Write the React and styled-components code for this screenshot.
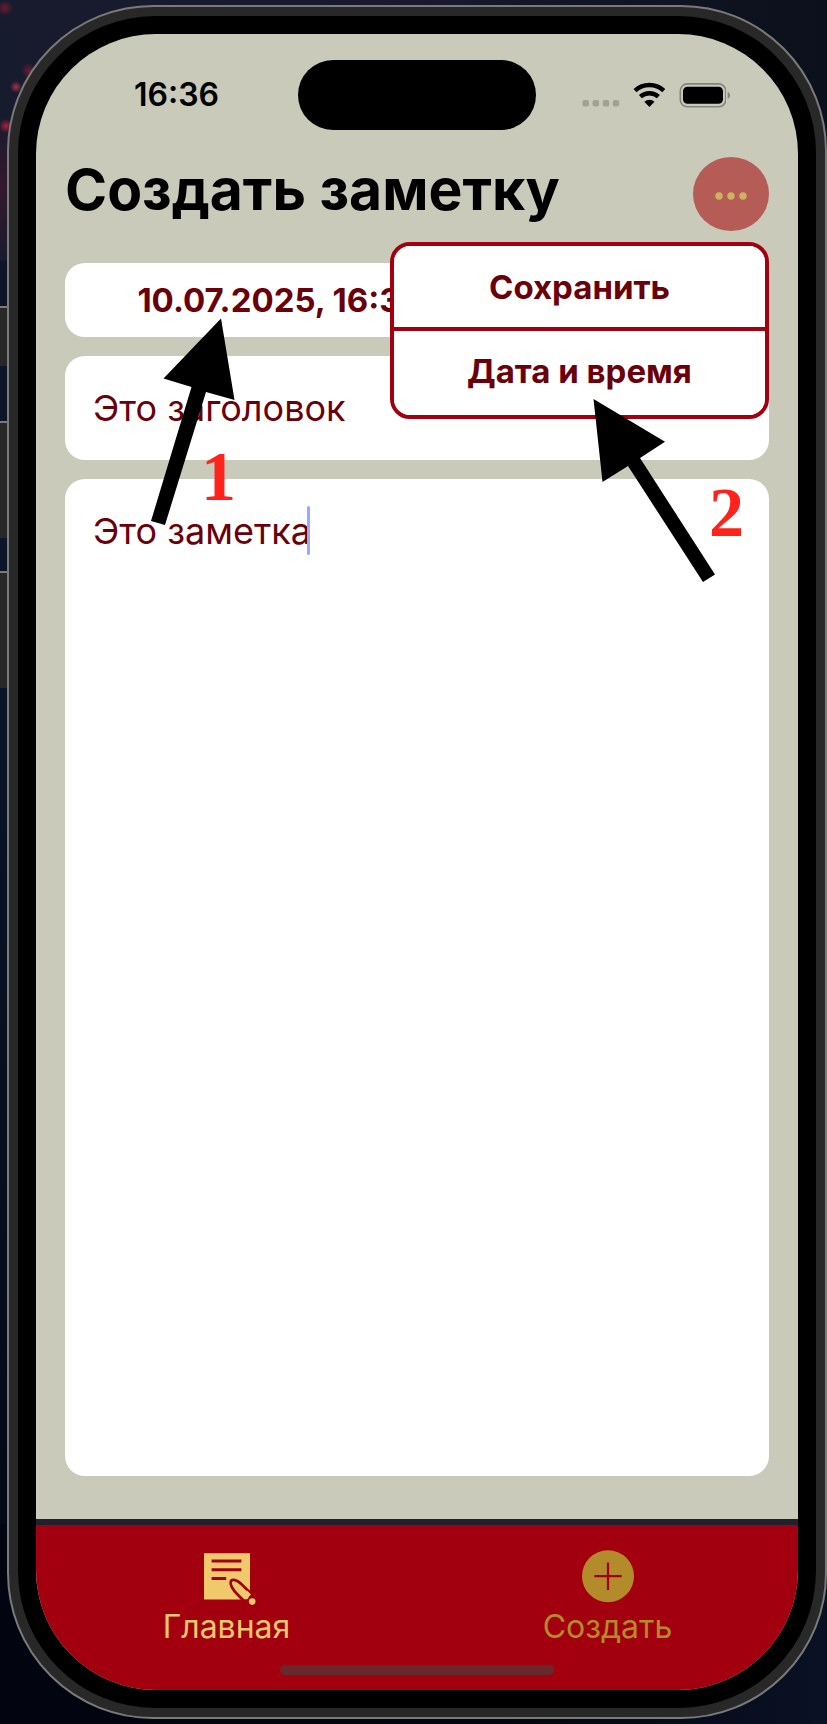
import React from "react";
import styled, { createGlobalStyle } from "styled-components";

const GlobalStyle = createGlobalStyle`
  *, *::before, *::after { box-sizing: border-box; }
  body {
    margin: 0;
    font-family: Inter, "Liberation Sans", sans-serif;
    background: #060a17;
  }
  button, input, textarea { font: inherit; margin: 0; border: 0; }
`;

const colors = {
  screen: "#c9cab9",
  maroon: "#6a000a",
  red: "#a3000f",
  gold: "#efc96c",
  goldDim: "#b38b2b",
  edge: "#7a7a7a",
  metal: "#282828",
};

const Desktop = styled.div`
  display: flex;
  min-height: 100vh;
  padding: 5px 0;
  background:
    radial-gradient(circle at 5px 8px, #6d1a30 0, transparent 8px),
    radial-gradient(circle at 16px 87px, #a83247 0, transparent 6px),
    radial-gradient(circle at 6px 126px, #b01f3a 0, transparent 7px),
    radial-gradient(circle at 29px 71px, #6d1a30 0, transparent 8px),
    radial-gradient(ellipse at 0 190px, #35182d 0, transparent 40px),
    linear-gradient(90deg, #171b2e 0, #1a1a2c 45%, #0b101c 100%) top / 100% 260px no-repeat,
    linear-gradient(90deg, #02040f 0, #03060f 60%, #0a1124 100%) bottom / 100% 200px no-repeat,
    linear-gradient(#12162a 0, #0a1428 40%, #020613 100%);
`;

const SideKeys = styled.div`
  flex: none;
  display: flex;
  flex-direction: column;
  width: 7px;
  padding-top: 301px;
`;

const SideKey = styled.div`
  height: ${(p) => p.$height}px;
  margin-bottom: ${(p) => p.$gap}px;
  border-top: 2px solid ${colors.edge};
  background: ${colors.metal};
`;

const Phone = styled.div`
  flex: 1;
  display: flex;
  border: 2px solid ${colors.edge};
  border-radius: 146px;
  background: ${colors.metal};
  padding: 9px;
`;

const Bezel = styled.div`
  flex: 1;
  display: flex;
  border-radius: 137px;
  background: #000;
  padding: 18px;
`;

const Screen = styled.div`
  position: relative;
  flex: 1;
  min-width: 0;
  display: flex;
  flex-direction: column;
  overflow: hidden;
  border-radius: 120px;
  background: ${colors.screen};
`;

const StatusBar = styled.div`
  display: grid;
  grid-template-columns: 1fr 238px 1fr;
  align-items: center;
  padding-top: 26px;
`;

const Clock = styled.time`
  justify-self: end;
  padding-right: 79px;
  font-size: 32px;
  line-height: 40px;
  font-weight: 600;
  color: #000;
`;

const Island = styled.div`
  height: 70px;
  border-radius: 35px;
  background: #000;
`;

const StatusIcons = styled.div`
  display: flex;
  padding-left: 46px;
`;

const Content = styled.main`
  flex: 1;
  display: flex;
  flex-direction: column;
  padding: 27px 29px 43px;
`;

const Header = styled.header`
  position: relative;
  display: flex;
  align-items: center;
  justify-content: space-between;
  margin-bottom: 32px;
`;

const Title = styled.h1`
  margin: 0;
  font-size: 57px;
  line-height: 66px;
  font-weight: 700;
  padding-bottom: 8px;
  color: #000;
  white-space: nowrap;
`;

const MoreButton = styled.button`
  flex: none;
  display: flex;
  align-items: center;
  justify-content: center;
  width: 76px;
  height: 74px;
  padding: 4px 0 0;
  border-radius: 50%;
  background: #b65c56;
`;

const Menu = styled.div`
  position: absolute;
  z-index: 2;
  top: 85px;
  right: 0;
  width: 379px;
  display: flex;
  flex-direction: column;
  overflow: hidden;
  border: 4px solid ${colors.red};
  border-radius: 20px;
  background: #fff;
`;

const MenuItem = styled.button`
  height: 81px;
  padding: 0;
  background: #fff;
  color: ${colors.maroon};
  font-size: 33px;
  line-height: 40px;
  font-weight: 700;

  & + & {
    height: 88px;
    padding-bottom: 4px;
    border-top: 4px solid ${colors.red};
  }
`;

const Form = styled.form`
  flex: 1;
  display: flex;
  flex-direction: column;
  gap: 19px;
`;

const DateField = styled.button`
  display: flex;
  width: 100%;
  padding: 0;
  border-radius: 20px;
  background: #fff;
  color: ${colors.maroon};
`;

const DateText = styled.span`
  width: 61%;
  text-align: center;
  font-size: 33px;
  line-height: 74px;
  font-weight: 700;
`;

const TitleInput = styled.input`
  width: 100%;
  height: 104px;
  padding: 0 28px;
  border-radius: 20px;
  outline: none;
  background: #fff;
  color: ${colors.maroon};
  font-size: 36px;
  line-height: 48px;
`;

const NoteBox = styled.div`
  position: relative;
  flex: 1;
  display: flex;
`;

const NoteInput = styled.textarea`
  flex: 1;
  min-height: 400px;
  padding: 28px;
  border-radius: 20px;
  outline: none;
  resize: none;
  background: #fff;
  color: ${colors.maroon};
  font-size: 36px;
  line-height: 48px;
`;

const Caret = styled.span`
  position: absolute;
  top: 27px;
  left: 242px;
  width: 3px;
  height: 49px;
  border-radius: 2px;
  background: #99a9ff;
`;

const TabBar = styled.nav`
  display: flex;
  flex-direction: column;
  align-items: center;
  border-top: 6px solid #21202c;
  background: ${colors.red};
  padding: 24px 0 15px;
`;

const Tabs = styled.div`
  display: flex;
  width: 100%;
`;

const Tab = styled.a`
  flex: 1;
  display: flex;
  flex-direction: column;
  align-items: center;
  text-decoration: none;
  color: ${(p) => (p.$active ? colors.goldDim : colors.gold)};
  font-size: 32px;
  line-height: 36px;
`;

const HomeIndicator = styled.div`
  width: 36%;
  height: 10px;
  margin-top: 20px;
  border-radius: 5px;
  background: #67292c;
`;

const Callout = styled.div`
  position: absolute;
  z-index: 3;
  pointer-events: none;
  top: ${(p) => p.$top}px;
  left: ${(p) => (p.$left === undefined ? "auto" : p.$left + "px")};
  right: ${(p) => (p.$right === undefined ? "auto" : p.$right + "px")};
`;

const CalloutNumber = styled(Callout)`
  font-family: "Liberation Serif", serif;
  font-weight: 700;
  font-size: 70px;
  line-height: 70px;
  color: #ff231b;
`;

const Arrow = styled.svg`
  display: block;
`;

const SignalDots = () => (
  <svg width="144" height="26" viewBox="0 0 144 26" aria-hidden="true">
    <g fill="#a1a294">
      <rect x="0.5" y="18" width="6.5" height="6.5" rx="2" />
      <rect x="10.6" y="18" width="6.5" height="6.5" rx="2" />
      <rect x="20.7" y="18" width="6.5" height="6.5" rx="2" />
      <rect x="30.8" y="18" width="6.5" height="6.5" rx="2" />
    </g>
    <g fill="none" stroke="#000" strokeWidth="4.4">
      <path d="M53 8.6a21.5 21.5 0 0 1 28.8 0" />
      <path d="M58.4 14.6a13.6 13.6 0 0 1 18 0" />
    </g>
    <path d="M67.4 24.9L62.3 19.7a7.6 7.6 0 0 1 10.2 0z" fill="#000" />
    <rect x="98.3" y="1.9" width="45.4" height="22.9" rx="7" fill="none" stroke="#85867b" strokeWidth="1.6" />
    <rect x="101" y="4.8" width="40" height="17" rx="4.5" fill="#000" />
  </svg>
);

const BatteryCap = () => (
  <svg width="5" height="26" viewBox="0 0 5 26" aria-hidden="true">
    <path d="M1.6 9.7c1.6.6 2.4 2 2.4 3.6s-.8 3-2.4 3.6z" fill="#85867b" />
  </svg>
);

const Dots = () => (
  <svg width="34" height="10" viewBox="0 0 34 10" aria-hidden="true">
    <g fill="#ccb360">
      <circle cx="5" cy="5" r="3.7" />
      <circle cx="17" cy="5" r="3.7" />
      <circle cx="29" cy="5" r="3.7" />
    </g>
  </svg>
);

const NoteIcon = () => (
  <svg width="60" height="60" viewBox="0 0 60 60" aria-hidden="true">
    <rect x="7" y="4.2" width="46" height="46.3" fill={colors.gold} />
    <path
      d="M14.6 12h29.8M14.6 20.8h29.8M14.6 29.6h14.6"
      stroke={colors.red}
      strokeWidth="3"
    />
    <path
      d="M53 43.5L43.5 34.3C40 31.5 36.5 30.3 34.5 31.3C32.3 33.5 34.3 38 37.5 42.2C40.5 45.8 43.5 48.4 46.5 51.5L51 52L54 47z"
      fill={colors.gold}
      stroke={colors.red}
      strokeWidth="2.8"
    />
    <path d="M44 51h6l4-5v9l-8 1z" fill={colors.red} />
    <path d="M46 46l4-4.5 4 4-4.5 4.5z" fill={colors.gold} />
    <circle cx="55.2" cy="52.6" r="3.3" fill={colors.gold} />
  </svg>
);

const PlusIcon = () => (
  <svg width="60" height="60" viewBox="0 0 60 60" aria-hidden="true">
    <circle cx="30" cy="27.2" r="26" fill={colors.goldDim} />
    <path d="M16.3 27.2h27.4M30 13.5v27.4" stroke={colors.red} strokeWidth="2.2" />
  </svg>
);

export default function App() {
  return (
    <>
      <GlobalStyle />
      <Desktop>
        <SideKeys>
          <SideKey $height={60} $gap={55} />
          <SideKey $height={117} $gap={33} />
          <SideKey $height={117} $gap={0} />
        </SideKeys>
        <Phone>
          <Bezel>
            <Screen>
              <StatusBar>
                <Clock>16:36</Clock>
                <Island />
                <StatusIcons>
                  <SignalDots />
                  <BatteryCap />
                </StatusIcons>
              </StatusBar>

              <Content>
                <Header>
                  <Title>Создать заметку</Title>
                  <MoreButton type="button" aria-label="Меню">
                    <Dots />
                  </MoreButton>
                  <Menu>
                    <MenuItem type="button">Сохранить</MenuItem>
                    <MenuItem type="button">Дата и время</MenuItem>
                  </Menu>
                </Header>

                <Form>
                  <DateField type="button">
                    <DateText>10.07.2025, 16:36</DateText>
                  </DateField>
                  <TitleInput type="text" aria-label="Заголовок" defaultValue="Это заголовок" />
                  <NoteBox>
                    <NoteInput aria-label="Заметка" defaultValue="Это заметка" />
                    <Caret />
                  </NoteBox>
                </Form>
              </Content>

              <TabBar>
                <Tabs>
                  <Tab href="#home">
                    <NoteIcon />
                    Главная
                  </Tab>
                  <Tab href="#create" $active>
                    <PlusIcon />
                    Создать
                  </Tab>
                </Tabs>
                <HomeIndicator />
              </TabBar>

              <Callout $top={284} $left={114}>
                <Arrow width="86" height="208" viewBox="0 0 86 208" aria-hidden="true">
                  <path d="M71 .5L84.5 82 56 74 15 207 1 203 41.500 69 13.500 60.500z" />
                </Arrow>
              </Callout>
              <CalloutNumber $top={408} $left={165}>1</CalloutNumber>

              <Callout $top={364} $right={82}>
                <Arrow width="124" height="186" viewBox="0 0 124 186" aria-hidden="true">
                  <path d="M1.500 1L73 43.700 48 60 123 176.500 111 184 36 68 10.500 84z" />
                </Arrow>
              </Callout>
              <CalloutNumber $top={444} $right={54}>2</CalloutNumber>
            </Screen>
          </Bezel>
        </Phone>
      </Desktop>
    </>
  );
}
